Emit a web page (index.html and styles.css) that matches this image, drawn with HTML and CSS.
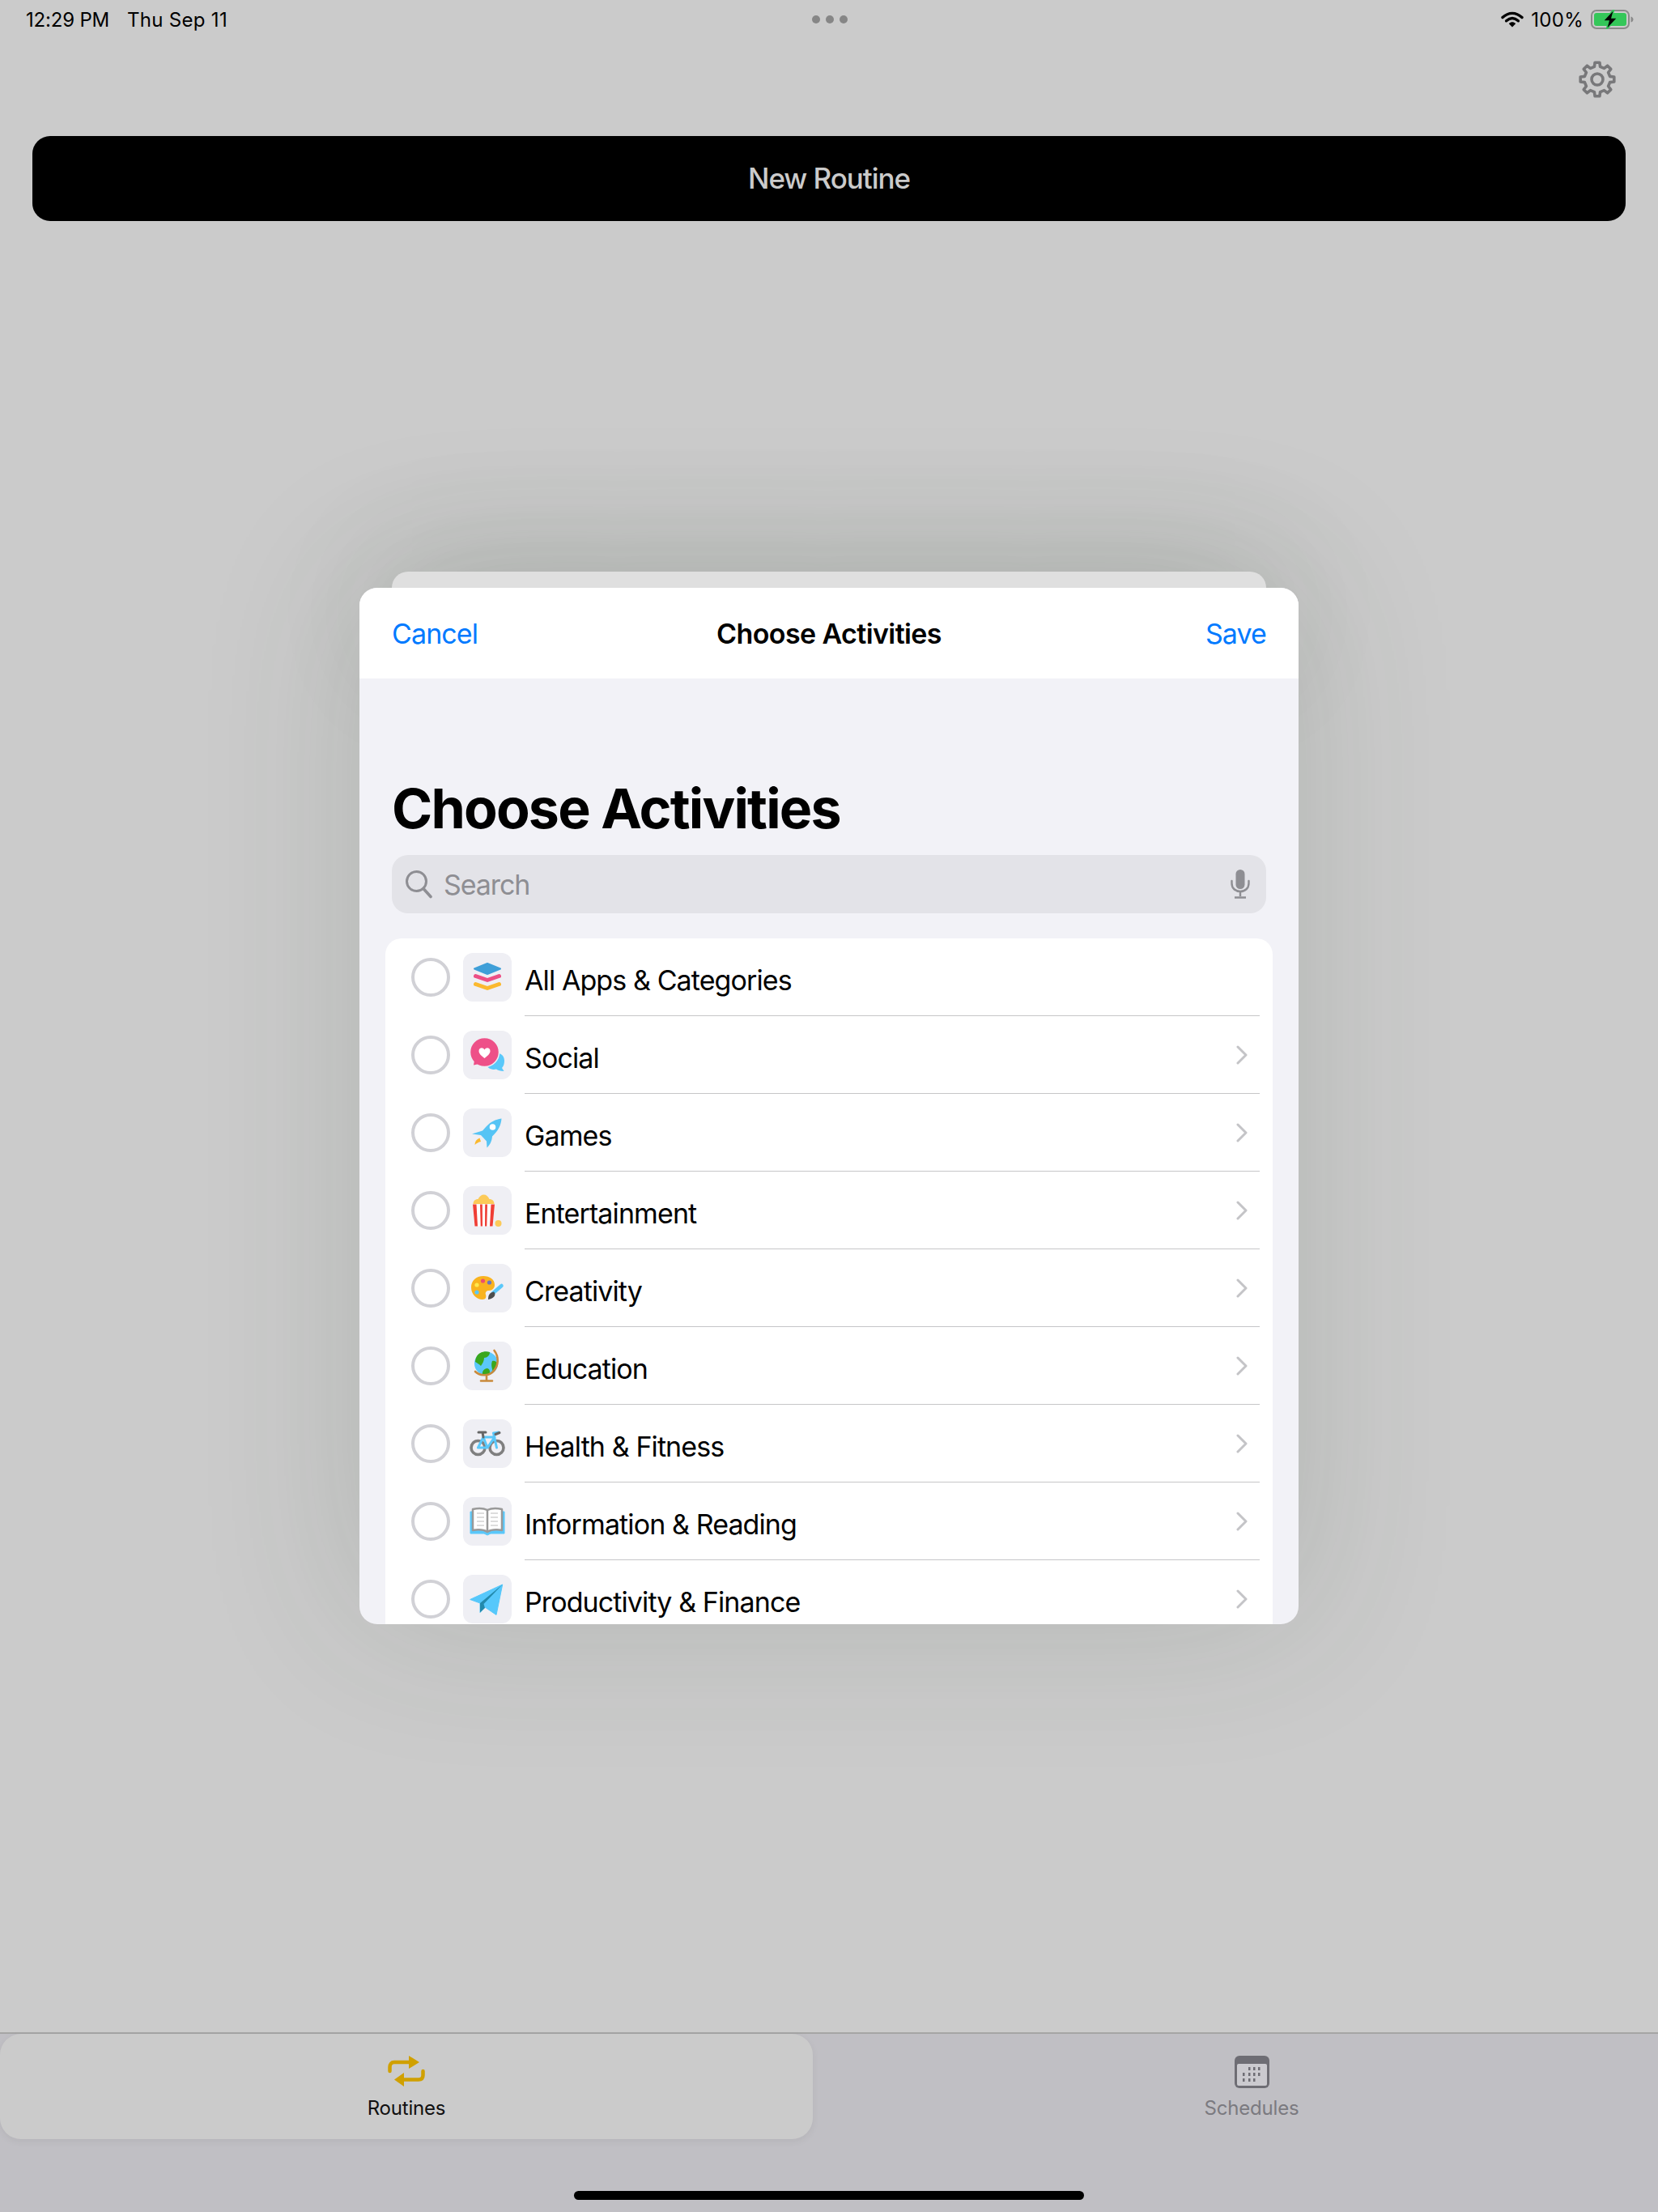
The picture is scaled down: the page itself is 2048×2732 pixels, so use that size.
FILE: index.html
```html
<!DOCTYPE html>
<html lang="en">
<head>
<meta charset="utf-8">
<title>Choose Activities</title>
<link rel="stylesheet" href="styles.css">
</head>
<body>
<div class="screen">
  <header class="status">
    <div class="status-left"><span class="time">12:29 PM</span><span class="date">Thu Sep 11</span></div>
    <div class="dots"><i></i><i></i><i></i></div>
    <div class="status-right">
      <svg class="wifi" viewBox="0 0 28 20"><path d="M2 7.5C9.5 .6 18.5 .6 26 7.5" fill="none" stroke="#000" stroke-width="3.4" stroke-linecap="round"/><path d="M6.6 11.8C11.4 7.6 16.6 7.6 21.4 11.8" fill="none" stroke="#000" stroke-width="3.4" stroke-linecap="round"/><path d="M9.8 15.2C12.5 12.6 15.5 12.6 18.2 15.2L14 19.6Z" fill="#000"/></svg>
      <span class="pct">100%</span>
      <svg class="battery" viewBox="0 0 53 24"><rect x="1" y="1" width="46" height="22" rx="6" fill="none" stroke="#8a8a8a" stroke-width="2"/><rect x="4" y="4" width="40" height="16" rx="3" fill="#34c759"/><path d="M49.500 8.500C51.500 9 52.500 10.500 52.500 12S51.500 15 49.500 15.500Z" fill="#8a8a8a"/><path d="M29 -1L15 14H22L19 25L33 10H26Z" fill="#000" stroke="#34c759" stroke-width="1.500"/></svg>
    </div>
  </header>
  <div class="toolbar">
    <svg class="gear" viewBox="-24 -24 48 48"><polygon points="-3.6,-15.6 -2.92,-20.8 2.92,-20.8 3.6,-15.6 8.49,-13.58 12.64,-16.77 16.77,-12.64 13.58,-8.49 15.6,-3.6 20.8,-2.92 20.8,2.92 15.6,3.6 13.58,8.49 16.77,12.64 12.64,16.77 8.49,13.58 3.6,15.6 2.92,20.8 -2.92,20.8 -3.6,15.6 -8.49,13.58 -12.64,16.77 -16.77,12.64 -13.58,8.49 -15.6,3.6 -20.8,2.92 -20.8,-2.92 -15.6,-3.6 -13.58,-8.49 -16.77,-12.64 -12.64,-16.77 -8.49,-13.58" fill="none" stroke="#78787a" stroke-width="3.6" stroke-linejoin="round"/><circle r="7" fill="none" stroke="#78787a" stroke-width="3.6"/></svg>
  </div>
  <div class="new-routine">New Routine</div>
  <main class="content"></main>
  <nav class="tabbar">
    <div class="tab tab-active">
      <svg class="tab-icon-routines" viewBox="0 0 46 38"><path d="M2.500 19V14C2.500 10.500 4.500 8 8 8H28" fill="none" stroke="#d0a000" stroke-width="4.500" stroke-linecap="round"/><path d="M26 0L39 8L26 16Z" fill="#d0a000"/><path d="M43.500 19V24C43.500 27.500 41.500 29.500 38 29.500H19" fill="none" stroke="#d0a000" stroke-width="4.500" stroke-linecap="round"/><path d="M20 21L8 29.500L20 38Z" fill="#d0a000"/></svg>
      <span class="tab-label">Routines</span>
    </div>
    <div class="tab tab-plain">
      <svg class="tab-icon-schedules" viewBox="0 0 43 40"><rect width="43" height="40" rx="6" fill="#6e6d74"/><rect x="3" y="10" width="37" height="27" rx="2" fill="#cbcacf"/><g fill="#6e6d74"><rect x="17" y="14" width="2.500" height="4"/><rect x="23" y="14" width="2.500" height="4"/><rect x="29" y="14" width="2.500" height="4"/><rect x="10" y="21" width="2.500" height="4"/><rect x="17" y="21" width="2.500" height="4"/><rect x="23" y="21" width="2.500" height="4"/><rect x="29" y="21" width="2.500" height="4"/><rect x="10" y="28" width="2.500" height="4"/><rect x="17" y="28" width="2.500" height="4"/><rect x="23" y="28" width="2.500" height="4"/></g></svg>
      <span class="tab-label tab-label-muted">Schedules</span>
    </div>
    <div class="home-indicator"></div>
  </nav>

  <div class="sheet-stack">
    <div class="sheet-back"></div>
    <section class="sheet">
      <div class="sheet-nav">
        <span class="nav-btn">Cancel</span>
        <span class="nav-title">Choose Activities</span>
        <span class="nav-btn nav-btn-end">Save</span>
      </div>
      <div class="sheet-body">
        <h1 class="large-title">Choose Activities</h1>
        <div class="search">
          <svg class="search-icon" viewBox="0 0 34 36"><circle cx="14.500" cy="14.500" r="12" fill="none" stroke="#8e8e93" stroke-width="3"/><path d="M23 23.500L32 33.500" stroke="#8e8e93" stroke-width="3.600" stroke-linecap="round"/></svg>
          <span class="search-text">Search</span>
          <svg class="mic-icon" viewBox="0 0 24 36"><rect x="6.500" y="0" width="11" height="24" rx="5.500" fill="#8e8e93"/><path d="M1.500 14V17C1.500 23 6 27 12 27S22.500 23 22.500 17V14" fill="none" stroke="#8e8e93" stroke-width="2.400" stroke-linecap="round"/><path d="M12 27V33M5 34.500H19" stroke="#8e8e93" stroke-width="2.400"/></svg>
        </div>
        <div class="list">
          <div class="row">
            <span class="radio"></span>
            <span class="tile"><svg viewBox="0 0 60 60"><path d="M30 13L46 19.500L30 26L14 19.500Z" fill="#3f9fd8" stroke="#3f9fd8" stroke-width="2" stroke-linejoin="round"/><path d="M15.500 28.500L30 33.500L44.500 28.500" fill="none" stroke="#ec4f85" stroke-width="5" stroke-linecap="round" stroke-linejoin="round"/><path d="M15.500 38.500L30 43.500L44.500 38.500" fill="none" stroke="#fbb92f" stroke-width="5" stroke-linecap="round" stroke-linejoin="round"/></svg></span>
            <div class="row-main"><span class="row-text">All Apps &amp; Categories</span></div>
          </div>
          <div class="row">
            <span class="radio"></span>
            <span class="tile"><svg viewBox="0 0 60 60"><path d="M34 29C41 25 51 28 51 37C51 41 50 44 48 46L50.500 50C46 50 43 49 41 47.500C35 49 29 46 28 40Z" fill="#5ac8fa"/><circle cx="26.500" cy="26.500" r="18" fill="#ee5088" stroke="#efeff4" stroke-width="1.500"/><path d="M14 37L13 42.500L24 40Z" fill="#ee5088"/><path d="M26.500 34C22 30.500 19.500 28.200 19.500 25C19.500 21 24.500 20 26.500 23.500C28.500 20 33.500 21 33.500 25C33.500 28.200 31 30.500 26.500 34Z" fill="#fff"/></svg></span>
            <div class="row-main"><span class="row-text">Social</span><svg class="chev" viewBox="0 0 14 24"><path d="M2 2L12 12L2 22" fill="none" stroke="#c4c4c7" stroke-width="3" stroke-linecap="round" stroke-linejoin="round"/></svg></div>
          </div>
          <div class="row">
            <span class="radio"></span>
            <span class="tile"><svg viewBox="0 0 60 60"><path d="M47.500 12.500C40 13.500 34 16.500 28.500 22.500L24 27.500L11 31.500L22 33L29 40.500L29.500 48.500C33 45 35.500 41 36 34.500C43 28 47 21 47.500 12.500Z" fill="#56c4f5"/><circle cx="36.500" cy="23" r="3.800" fill="#fff"/><path d="M14.500 45C14.500 41 16.500 38 20.500 36.500L22 41C19 41.500 17 43 14.500 45Z" fill="#fbb92f"/></svg></span>
            <div class="row-main"><span class="row-text">Games</span><svg class="chev" viewBox="0 0 14 24"><path d="M2 2L12 12L2 22" fill="none" stroke="#c4c4c7" stroke-width="3" stroke-linecap="round" stroke-linejoin="round"/></svg></div>
          </div>
          <div class="row">
            <span class="radio"></span>
            <span class="tile"><svg viewBox="0 0 60 60"><path d="M12.500 22C12.500 17.500 16 16 18.500 16C20 12.500 23 10.500 25.500 10.500C28.500 10.500 31 12.500 32.500 16C35 16 38.500 17.500 38.500 22Z" fill="#fcca58"/><path d="M12 22.500H39L36.500 49.500H14.500Z" fill="#fff"/><path d="M12 22.500H16.500L18 49.500H14.500Z M21 22.500H23.800L24 49.500H21.700Z M27.200 22.500H30L29.300 49.500H27Z M34.500 22.500H39L36.500 49.500H33Z" fill="#ef3e36"/><circle cx="43.500" cy="46" r="4" fill="#fcca58"/></svg></span>
            <div class="row-main"><span class="row-text">Entertainment</span><svg class="chev" viewBox="0 0 14 24"><path d="M2 2L12 12L2 22" fill="none" stroke="#c4c4c7" stroke-width="3" stroke-linecap="round" stroke-linejoin="round"/></svg></div>
          </div>
          <div class="row">
            <span class="radio"></span>
            <span class="tile"><svg viewBox="0 0 60 60"><path d="M25 15C16 15 10 21 10 29C10 37 16 44 24 44C28 44 29 41 28 38C27 35 29 33 32 33C36 33 39 30 39 26C39 19 33 15 25 15Z" fill="#f9b31f"/><circle cx="24.500" cy="21" r="2.600" fill="#ec4f6d"/><circle cx="32.500" cy="23" r="2.600" fill="#6a75c0"/><circle cx="17" cy="26" r="2.600" fill="#ffe84d"/><circle cx="17" cy="35" r="2.600" fill="#5ac8fa"/><path d="M37 36L47.500 27" stroke="#5ac8fa" stroke-width="4.500" stroke-linecap="round"/><path d="M38 34.500C41 37 39.500 42.500 31 44C31 40 32 35 38 34.500Z" fill="#4d4d4d"/></svg></span>
            <div class="row-main"><span class="row-text">Creativity</span><svg class="chev" viewBox="0 0 14 24"><path d="M2 2L12 12L2 22" fill="none" stroke="#c4c4c7" stroke-width="3" stroke-linecap="round" stroke-linejoin="round"/></svg></div>
          </div>
          <div class="row">
            <span class="radio"></span>
            <span class="tile"><svg viewBox="0 0 60 60"><circle cx="28.500" cy="27" r="14.500" fill="#5ac8fa"/><path d="M17 18C20 13 27 11 33 13C33 17 30 20 26 20C26 24 24 27 22 30C20 28 17 26 15 25C15 22 16 20 17 18Z" fill="#3aa71d"/><path d="M24 41C23 37 26 33 30 33C33 34 34 37 32 41C29 42 26 42 24 41Z" fill="#3aa71d"/><path d="M36 24C39 23 42 25 43 28C42 32 40 35 37 38C36 33 34 29 36 24Z" fill="#3aa71d"/><path d="M38.500 11C44 18 45 30 36 38C30 43 20 42 15 37" fill="none" stroke="#c98a3b" stroke-width="2.600" stroke-linecap="round"/><path d="M29 42V48M22 48.500H36" stroke="#c98a3b" stroke-width="2.600" stroke-linecap="round"/></svg></span>
            <div class="row-main"><span class="row-text">Education</span><svg class="chev" viewBox="0 0 14 24"><path d="M2 2L12 12L2 22" fill="none" stroke="#c4c4c7" stroke-width="3" stroke-linecap="round" stroke-linejoin="round"/></svg></div>
          </div>
          <div class="row">
            <span class="radio"></span>
            <span class="tile"><svg viewBox="0 0 60 60"><circle cx="18.500" cy="35" r="8.500" fill="none" stroke="#7f7f7f" stroke-width="3.600"/><circle cx="41.500" cy="35" r="8.500" fill="none" stroke="#7f7f7f" stroke-width="3.600"/><path d="M18.500 35L25 22H39L30 35H18.500M25 22L30 35M39 22L37.500 17L44 16M37.500 17L41.500 35" fill="none" stroke="#5ac8fa" stroke-width="3" stroke-linejoin="round" stroke-linecap="round"/><path d="M19 16H28M24 16L25 22" fill="none" stroke="#666" stroke-width="3" stroke-linecap="round"/><path d="M40 18.500L45 16.500" stroke="#666" stroke-width="3" stroke-linecap="round"/></svg></span>
            <div class="row-main"><span class="row-text">Health &amp; Fitness</span><svg class="chev" viewBox="0 0 14 24"><path d="M2 2L12 12L2 22" fill="none" stroke="#c4c4c7" stroke-width="3" stroke-linecap="round" stroke-linejoin="round"/></svg></div>
          </div>
          <div class="row">
            <span class="radio"></span>
            <span class="tile"><svg viewBox="0 0 60 60"><path d="M9 18H51V45H34L30 47L26 45H9Z" fill="#5ac8fa" stroke="#5ac8fa" stroke-linejoin="round"/><path d="M12 15C18 13.500 25 13.500 30 16C35 13.500 42 13.500 48 15V41C42 40 35 40 30 43C25 40 18 40 12 41Z" fill="#fff" stroke="#999" stroke-width="2.500" stroke-linejoin="round"/><path d="M30 16V43" stroke="#999" stroke-width="2.500"/><path d="M17 20H26M17 25H26M17 30H26M17 35H26M34 20H43M34 25H43M34 30H43M34 35H43" stroke="#ddd" stroke-width="2"/></svg></span>
            <div class="row-main"><span class="row-text">Information &amp; Reading</span><svg class="chev" viewBox="0 0 14 24"><path d="M2 2L12 12L2 22" fill="none" stroke="#c4c4c7" stroke-width="3" stroke-linecap="round" stroke-linejoin="round"/></svg></div>
          </div>
          <div class="row">
            <span class="radio"></span>
            <span class="tile"><svg viewBox="0 0 60 60"><path d="M48.700 12L8.700 30.500L21 35V46.500L27 40L41 49.500Z" fill="#56c8fb" stroke="#56c8fb" stroke-linejoin="round"/><path d="M48.700 12L21 35V46.500L27 41L25.500 36Z" fill="#2289ab"/></svg></span>
            <div class="row-main"><span class="row-text">Productivity &amp; Finance</span><svg class="chev" viewBox="0 0 14 24"><path d="M2 2L12 12L2 22" fill="none" stroke="#c4c4c7" stroke-width="3" stroke-linecap="round" stroke-linejoin="round"/></svg></div>
          </div>
        </div>
      </div>
    </section>
  </div>
</div>
</body>
</html>
```
FILE: styles.css
```css
* { box-sizing: border-box; }
html, body { margin: 0; padding: 0; }
body { font-family: Inter, "Liberation Sans", sans-serif; background: #cbcbcb; }

.screen {
  position: relative;
  width: 2048px;
  height: 2732px;
  display: flex;
  flex-direction: column;
  overflow: hidden;
  background: #cbcbcb;
}

/* status bar */
.status {
  height: 48px;
  display: grid;
  grid-template-columns: 1fr auto 1fr;
  align-items: center;
  padding: 0 30px 0 32px;
  font-size: 24px;
  color: #000;
}
.status-left { display: flex; gap: 22px; }
.time { letter-spacing: -0.2px; }
.date { letter-spacing: 0.3px; }
.dots { display: flex; gap: 7px; }
.dots i { width: 10px; height: 10px; border-radius: 50%; background: #868686; }
.status-right { display: flex; align-items: center; justify-content: flex-end; gap: 9px; }
.pct { letter-spacing: 0.3px; }
.wifi { width: 28px; height: 20px; }
.battery { width: 53px; height: 24px; }

/* toolbar */
.toolbar { height: 120px; display: flex; justify-content: flex-end; padding: 26px 51px 0 0; }
.gear { width: 48px; height: 48px; }

.new-routine {
  margin: 0 40px;
  height: 105px;
  padding-bottom: 2px;
  background: #000;
  border-radius: 22px;
  color: #cbcbcb;
  font-size: 35px;
  font-weight: 500;
  letter-spacing: -1.05px;
  display: flex;
  align-items: center;
  justify-content: center;
}
.content { flex: 1; }

/* tab bar */
.tabbar {
  height: 222px;
  background: #c0bfc4;
  border-top: 2px solid #a5a5a5;
  display: grid;
  grid-template-columns: 1004px 1fr;
  position: relative;
  align-items: start;
}
.tab {
  height: 130px;
  padding-top: 27px;
  display: flex;
  flex-direction: column;
  align-items: center;
}
.tab-active {
  background: #cbcbcb;
  border-radius: 26px;
  box-shadow: 0 3px 10px rgba(0, 0, 0, 0.06);
}
.tab-plain { padding-left: 40px; }
.tab-icon-routines { width: 46px; height: 38px; margin-bottom: 11px; }
.tab-icon-schedules { width: 43px; height: 40px; margin-bottom: 9px; }
.tab-label { font-size: 24px; line-height: 32px; color: #111; letter-spacing: -0.2px; }
.tab-label-muted { color: #7b7a80; }
.home-indicator {
  position: absolute;
  left: 709px;
  top: 194px;
  width: 630px;
  height: 11px;
  border-radius: 6px;
  background: #000;
}

/* modal */
.sheet-stack {
  position: absolute;
  left: 444px;
  top: 726px;
  width: 1160px;
  height: 1280px;
}
.sheet-back {
  position: absolute;
  left: 40px;
  top: -20px;
  width: 1080px;
  height: 100px;
  background: #dfdfdf;
  border-radius: 20px 20px 0 0;
  box-shadow: 0 0 160px rgba(50, 70, 50, 0.16);
}
.sheet {
  position: relative;
  height: 100%;
  border-radius: 22px;
  overflow: hidden;
  background: #f2f2f7;
  display: flex;
  flex-direction: column;
}
.sheet-stack::before {
  content: "";
  position: absolute;
  inset: 0;
  border-radius: 22px;
  box-shadow: 0 -10px 200px rgba(50, 70, 50, 0.16);
}
.sheet-nav {
  height: 112px;
  flex: none;
  background: #fff;
  display: grid;
  grid-template-columns: 1fr auto 1fr;
  align-items: center;
  padding: 0 40px;
  font-size: 34px;
}
.nav-btn { color: #007aff; letter-spacing: -0.9px; }
.nav-btn-end { justify-self: end; }
.nav-title { font-weight: 600; color: #000; letter-spacing: -0.6px; }

.sheet-body { flex: 1; min-height: 0; display: flex; flex-direction: column; padding: 0 32px; }
.large-title {
  margin: 110px 0 8px 8px;
  height: 100px;
  line-height: 100px;
  font-size: 68px;
  font-weight: 700;
  letter-spacing: -1.8px;
  color: #000;
}
.search {
  margin: 0 8px;
  height: 72px;
  flex: none;
  background: #e3e3e8;
  border-radius: 20px;
  display: flex;
  align-items: center;
  padding: 0 20px 0 16px;
  color: #8e8e93;
}
.search-icon { width: 34px; height: 36px; flex: none; }
.search-text { flex: 1; font-size: 34px; margin-left: 14px; letter-spacing: -1.1px; }
.mic-icon { width: 24px; height: 36px; flex: none; }

.list {
  margin-top: 31px;
  background: #fff;
  border-radius: 20px 20px 0 0;
  flex: none;
}
.row { height: 96px; display: flex; align-items: center; padding-left: 32px; }
.radio {
  width: 48px;
  height: 48px;
  flex: none;
  border-radius: 50%;
  border: 4px solid #d1d1d6;
  background: #fff;
}
.tile {
  width: 60px;
  height: 60px;
  flex: none;
  margin-left: 16px;
  border-radius: 12px;
  background: #efeff4;
  display: block;
}
.tile svg { width: 60px; height: 60px; display: block; }
.row-main {
  flex: 1;
  height: 96px;
  margin: 0 16px;
  border-bottom: 1px solid #c6c6c8;
  display: flex;
  align-items: center;
  justify-content: space-between;
  padding: 7px 15px 0 0;
}
.row-text { font-size: 34px; color: #000; letter-spacing: -0.9px; }
.chev { width: 14px; height: 24px; margin-top: -7px; }
```
